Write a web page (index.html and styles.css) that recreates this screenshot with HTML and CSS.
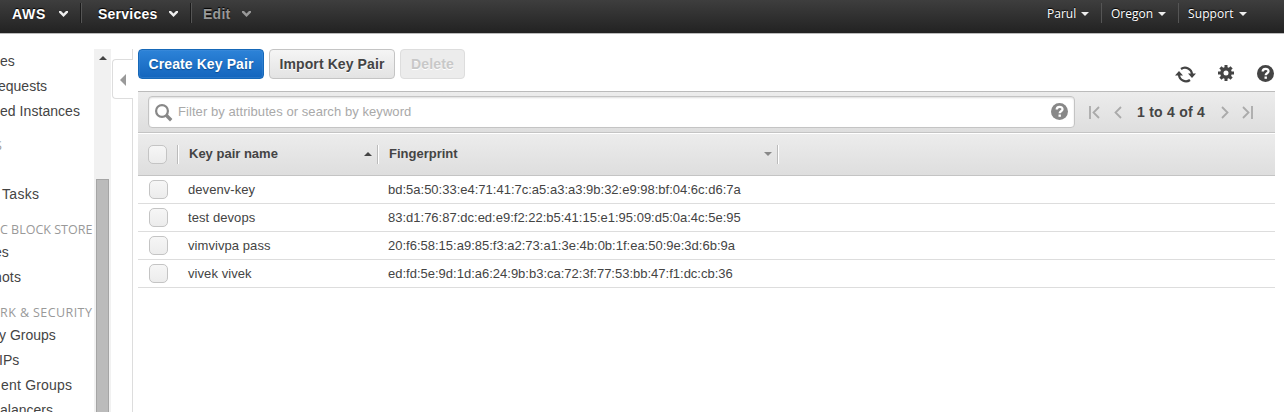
FILE: index.html
```html
<!DOCTYPE html>
<html lang="en">
<head>
<meta charset="utf-8">
<title>Key Pairs</title>
<link rel="stylesheet" href="styles.css">
</head>
<body>
<header class="topbar">
  <nav class="nav-main">
    <a class="nav-item nav-aws"><span>AWS</span><svg class="chev" width="9" height="6" viewBox="0 0 9 6"><path d="M0 0h2l2.500 2.500L7 0h2v1.500L4.500 6 0 1.500z"/></svg></a>
    <a class="nav-item nav-services"><span>Services</span><svg class="chev" width="9" height="6" viewBox="0 0 9 6"><path d="M0 0h2l2.500 2.500L7 0h2v1.500L4.500 6 0 1.500z"/></svg></a>
    <a class="nav-item nav-edit"><span>Edit</span><svg class="chev" width="9" height="6" viewBox="0 0 9 6"><path d="M0 0h2l2.500 2.500L7 0h2v1.500L4.500 6 0 1.500z"/></svg></a>
  </nav>
  <nav class="nav-user">
    <a class="user-item parul"><span>Parul</span><i class="caret"></i></a>
    <a class="user-item oregon"><span>Oregon</span><i class="caret"></i></a>
    <a class="user-item support"><span>Support</span><i class="caret"></i></a>
  </nav>
</header>
<div class="body">
  <aside class="sidebar">
    <a class="link">es</a>
    <a class="link requests">equests</a>
    <a class="link reserved">ed Instances</a>
    <h3 class="group images">S</h3>
    <a class="link tasks">Tasks</a>
    <h3 class="group store">C BLOCK STORE</h3>
    <a class="link volumes">es</a>
    <a class="link snap">hots</a>
    <h3 class="group security">RK &amp; SECURITY</h3>
    <a class="link sec">y Groups</a>
    <a class="link ips">IPs</a>
    <a class="link placement">ent Groups</a>
    <a class="link lb">alancers</a>
  </aside>
  <div class="scrollbar"><i class="up"></i><i class="thumb"></i></div>
  <div class="splitter">
    <div class="tab"><i></i></div>
  </div>
  <main class="content">
    <div class="actions">
      <button class="btn primary">Create Key Pair</button>
      <button class="btn import">Import Key Pair</button>
      <button class="btn disabled">Delete</button>
      <div class="tools">
        <svg class="refresh" width="21" height="17" viewBox="0 0 21 17"><g fill="none" stroke="#444" stroke-width="2.200"><path d="M6 3A7 7 0 0 1 17 8.500"/><path d="M15 14A7 7 0 0 1 4 8.500"/></g><path fill="#444" d="M13 7.500h8L17 12zM0 9.500h8L4 5z"/></svg>
        <svg class="gear" width="16" height="16" viewBox="0 0 16 16"><path fill="#444" fill-rule="evenodd" d="M6.500 0h3v2.300l1.300.5 1.700-1.600 2.200 2.200-1.600 1.700.5 1.400H16v3h-2.400l-.5 1.400 1.600 1.700-2.200 2.200-1.700-1.600-1.300.5V16h-3v-2.300l-1.300-.5-1.700 1.600-2.200-2.200 1.600-1.700-.5-1.400H0v-3h2.400l.5-1.400-1.600-1.700 2.200-2.200 1.700 1.600 1.300-.5zM8 5.500a2.500 2.500 0 1 0 0 5 2.500 2.500 0 0 0 0-5z"/></svg>
        <svg width="17" height="17" viewBox="0 0 17 17"><circle cx="8.500" cy="8.500" r="8.500" fill="#444"/><path d="M5.700 6.500c0-3.600 5.800-3.400 5.800-.3 0 2-2.800 2-2.800 4" fill="none" stroke="#fff" stroke-width="2.300"/><path d="M7.500 11.500h2.400v2.300H7.500z" fill="#fff"/></svg>
      </div>
    </div>
    <div class="filter">
      <div class="search">
        <svg class="glass" width="18" height="18" viewBox="0 0 18 18"><circle cx="7" cy="7" r="5.900" fill="none" stroke="#888" stroke-width="2.200"/><path d="M11.300 11.300l4.900 4.900" stroke="#888" stroke-width="3.400"/></svg>
        <span class="placeholder">Filter by attributes or search by keyword</span>
        <svg class="help" width="17" height="17" viewBox="0 0 17 17"><circle cx="8.500" cy="8.500" r="8.500" fill="#888"/><path d="M5.700 6.500c0-3.600 5.800-3.400 5.800-.3 0 2-2.800 2-2.800 4" fill="none" stroke="#fff" stroke-width="2.300"/><path d="M7.500 11.500h2.400v2.300H7.500z" fill="#fff"/></svg>
      </div>
      <div class="pager">
        <svg class="first" width="11" height="13" viewBox="0 0 11 13"><path d="M1 0v13M10 1L4.500 6.500 10 12"/></svg>
        <svg class="prev" width="8" height="13" viewBox="0 0 8 13"><path d="M7 1L1.500 6.500 7 12"/></svg>
        <span class="count">1 to 4 of 4</span>
        <svg class="next" width="8" height="13" viewBox="0 0 8 13"><path d="M1 1l5.500 5.500L1 12"/></svg>
        <svg class="last" width="11" height="13" viewBox="0 0 11 13"><path d="M10 0v13M1 1l5.500 5.500L1 12"/></svg>
      </div>
    </div>
    <div class="thead">
      <i class="check"></i>
      <div class="col name"><span>Key pair name</span><i class="sort-up"></i></div>
      <div class="col finger"><span>Fingerprint</span><i class="sort-down"></i></div>
      <div class="col"></div>
    </div>
    <div class="row"><i class="check"></i><span class="key">devenv-key</span><span>bd:5a:50:33:e4:71:41:7c:a5:a3:a3:9b:32:e9:98:bf:04:6c:d6:7a</span></div>
    <div class="row"><i class="check"></i><span class="key">test devops</span><span>83:d1:76:87:dc:ed:e9:f2:22:b5:41:15:e1:95:09:d5:0a:4c:5e:95</span></div>
    <div class="row"><i class="check"></i><span class="key">vimvivpa pass</span><span>20:f6:58:15:a9:85:f3:a2:73:a1:3e:4b:0b:1f:ea:50:9e:3d:6b:9a</span></div>
    <div class="row"><i class="check"></i><span class="key">vivek vivek</span><span>ed:fd:5e:9d:1d:a6:24:9b:b3:ca:72:3f:77:53:bb:47:f1:dc:cb:36</span></div>
  </main>
</div>
</body>
</html>
```
FILE: styles.css
```css
* { box-sizing: border-box; }
body { margin: 0; width: 1284px; height: 412px; overflow: hidden; background: #fff; color: #444; font: 13px "Liberation Sans", Arial, sans-serif; display: flex; flex-direction: column; }
svg, i { display: block; flex: none; }
.topbar { flex: none; height: 34px; display: flex; justify-content: space-between; background: linear-gradient(#3e3e3e, #222); border-bottom: 1px solid #bbb; color: #fff; text-shadow: 0 -1px 1px #000; }
.nav-main, .nav-user { display: flex; padding-top: 3px; height: 23px; }
.nav-item { display: flex; align-items: center; font-weight: bold; font-size: 14px; letter-spacing: .25px; border-right: 1px solid #555; box-shadow: inset -1px 0 #1b1b1b; }
.nav-item span { padding-top: 2px; }
.nav-item .chev { margin-left: auto; margin-top: 2px; fill: #eee; }
.nav-aws { width: 82px; padding: 0 13px 0 12px; letter-spacing: .7px; }
.nav-services { width: 110px; padding: 0 13px 0 16px; }
.nav-edit { width: 72px; padding: 0 13px 0 11px; border: 0; box-shadow: none; color: #999; }
.nav-edit .chev { fill: #999; }
.user-item { display: flex; align-items: center; font: 500 12px "Open Sans", "Noto Sans", sans-serif; border-right: 1px solid #555; }
.caret { margin-left: auto; margin-top: 1px; border: 4px solid transparent; border-top-color: #eee; border-bottom: 0; }
.parul { width: 55px; padding-right: 12px; }
.oregon { width: 77px; padding: 0 12px 0 9px; }
.support { width: 105px; padding: 0 37px 0 9px; border: 0; letter-spacing: .1px; }
.body { flex: 1; display: flex; min-height: 0; }
.sidebar { width: 94px; overflow: hidden; padding-top: 15px; }
.link { display: block; height: 25px; line-height: 25px; font-size: 14px; white-space: nowrap; }
.group { margin: 0; height: 25px; font: 12.500px/25px "Open Sans", "Noto Sans", sans-serif; color: #999; white-space: nowrap; }
.requests { margin-left: -2px; }
.reserved { letter-spacing: .05px; }
.images { margin: 9px 0 24px -5px; }
.tasks { margin-left: 2px; letter-spacing: .3px; }
.store { margin-top: 10px; height: 23px; }
.volumes { margin-left: -6px; }
.snap { margin-left: -6px; letter-spacing: .15px; }
.security { margin-top: 10px; height: 23px; letter-spacing: .42px; }
.sec, .ips { margin-left: -1px; }
.placement { margin-left: 1px; letter-spacing: .2px; }
.scrollbar { width: 17px; margin-top: 15px; background: #f1f1f1; display: flex; flex-direction: column; align-items: center; padding-top: 7px; }
.up { border: 4px solid transparent; border-bottom-color: #444; border-top: 0; }
.thumb { width: 13px; height: 240px; margin-top: 119px; background: #bbb; border: 1px solid #a5a5a5; }
.splitter { width: 22px; margin-top: 15px; border-right: 1px solid #ddd; padding: 10px 0 0 1px; }
.tab { width: 21px; height: 40px; background: #fff; border: 1px solid #ddd; border-right: 0; border-radius: 4px 0 0 4px; padding: 14px 0 0 7px; }
.tab i { width: 0; border: 6px solid transparent; border-right-color: #999; border-left: 0; }
.content { width: 1137px; margin-left: 5px; padding-top: 15px; }
.actions { display: flex; height: 42px; gap: 5px; }
.btn { height: 30px; width: 126px; padding: 0; text-align: center; font: bold 14px "Liberation Sans", Arial, sans-serif; letter-spacing: .1px; color: #444; border: 1px solid #c4c4c4; border-radius: 4px; background: linear-gradient(#f5f5f5, #e3e3e3); white-space: nowrap; text-shadow: 0 1px #fff; }
.primary { color: #fff; border-color: #1668b8; background: linear-gradient(#2d83d8, #1365bd); text-shadow: 0 1px 1px #0b4c91; box-shadow: inset 0 0 0 1px #4b93dc55; }
.disabled { width: 65px; color: #c8c8c8; border-color: #ddd; background: #ececec; letter-spacing: .2px; }
.tools { margin-left: auto; display: flex; padding: 16px 1px 0 0; }
.refresh { margin-top: 1px; }
.gear { margin: 0 23px 0 22px; }
.filter { height: 42px; display: flex; border-top: 1px solid #bbb; border-bottom: 1px solid #c4c4c4; background: linear-gradient(#ececec, #dedede); padding: 4px 22px 4px 10px; }
.search { width: 927px; height: 32px; background: #fff; border: 1px solid #c4c4c4; border-radius: 4px; display: flex; align-items: center; padding: 0 6px; box-shadow: inset 0 1px 2px #ddd; }
.glass { margin-top: 1px; }
.placeholder { margin: 0 0 2px 5px; color: #a9a9a9; letter-spacing: .07px; }
.help { margin-left: auto; margin-bottom: 1px; }
.pager { flex: 1; display: flex; align-items: center; padding-left: 14px; }
.pager path { fill: none; stroke: #aaa; stroke-width: 1.800; }
.prev { margin-left: 14px; }
.count { width: 69px; margin-left: 15px; font-size: 14px; font-weight: bold; letter-spacing: .25px; white-space: nowrap; }
.next { margin-left: 15px; }
.last { margin-left: 13px; }
.thead { height: 43px; display: flex; align-items: center; border-top: 1px solid #fff; border-bottom: 1px solid #c4c4c4; background: linear-gradient(#ececec, #dedede); padding-left: 10px; font-weight: bold; }
.check { width: 19px; height: 19px; border: 1px solid #c4c4c4; border-radius: 5px; background: linear-gradient(#f6f6f6, #ececec); }
.col { height: 19px; border-left: 1px solid #bbb; box-shadow: inset 1px 0 #fff; display: flex; align-items: center; padding: 0 5px 0 11px; }
.col span { margin-bottom: 2px; }
.name { width: 200px; margin-left: 10px; }
.finger { width: 400px; }
.sort-up, .sort-down { margin-left: auto; margin-bottom: 2px; border: 4px solid transparent; }
.sort-up { border-bottom-color: #444; border-top: 0; }
.sort-down { border-top-color: #888; border-bottom: 0; }
.row { height: 28px; display: flex; align-items: center; border-bottom: 1px solid #ddd; padding-left: 11px; }
.key { width: 200px; margin-left: 20px; letter-spacing: .07px; }
```
